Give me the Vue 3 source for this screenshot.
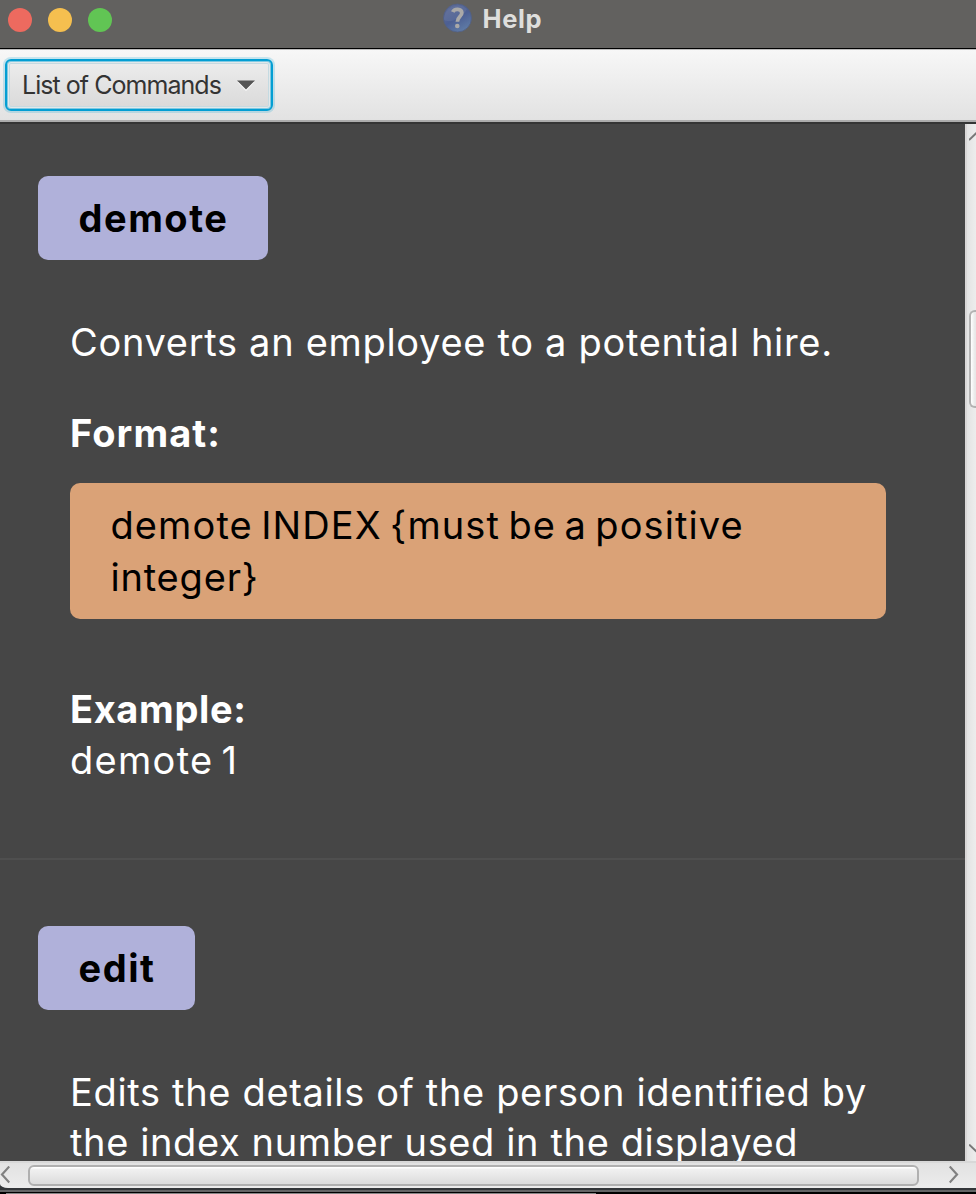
<script setup>
const commands = [
  {
    name: 'demote',
    summary: [{ text: 'Converts an employee to a potential hire.', fit: 's69' }],
    format: [
      { text: 'demote INDEX {must be a positive', fit: 'tight-words' },
      { text: 'integer}', fit: 's80' },
    ],
    example: 'demote 1',
  },
  {
    name: 'edit',
    summary: [
      { text: 'Edits the details of the person identified by', fit: 's66' },
      { text: 'the index number used in the displayed', fit: 's62' },
    ],
  },
]
</script>

<template>
  <div class="window">
    <header class="titlebar">
      <div class="lights">
        <i class="light red"></i>
        <i class="light yellow"></i>
        <i class="light green"></i>
      </div>
      <div class="title">
        <svg width="30" height="30" viewBox="0 0 30 30">
          <defs>
            <linearGradient id="orb" x1="0.2" y1="0" x2="0.8" y2="1">
              <stop offset="0" stop-color="#5f6c98" />
              <stop offset="0.5" stop-color="#4c5f93" />
              <stop offset="1" stop-color="#6280a9" />
            </linearGradient>
          </defs>
          <circle cx="15.5" cy="15" r="14" fill="url(#orb)" stroke="#526083" stroke-width="0.8" />
          <path d="M2 17C7 20 19 17 25 6A14 14 0 0 0 2 17Z" fill="#7584a8" opacity="0.28" />
          <path d="M10.8 9C12.2 5.4 19.6 5.2 19.8 9.8C19.9 13.7 15.4 13.4 15.4 18.8" fill="none" stroke="#aaa9a8" stroke-width="3.8" />
          <circle cx="15.3" cy="23" r="2.3" fill="#aaa9a8" />
        </svg>
        <span>Help</span>
      </div>
    </header>

    <div class="toolbar">
      <button class="menu-button">
        <span>List of Commands</span>
        <svg width="18" height="11" viewBox="0 0 18 11">
          <path d="M0.5 2H17.5L9 11Z" fill="#fff" />
          <path d="M0 0.5H18L9 9.5Z" fill="#555" />
        </svg>
      </button>
    </div>

    <div class="body">
      <main class="page">
        <section v-for="cmd in commands" :key="cmd.name" class="command">
          <h2 class="badge">{{ cmd.name }}</h2>
          <div class="details">
            <p class="summary">
              <span v-for="line in cmd.summary" :key="line.text" class="line" :class="line.fit">{{ line.text }}</span>
            </p>
            <template v-if="cmd.format">
              <h3 class="label format-label">Format:</h3>
              <p class="format">
                <span v-for="line in cmd.format" :key="line.text" class="line" :class="line.fit">{{ line.text }}</span>
              </p>
              <h3 class="label example-label">Example:</h3>
              <p class="line example">{{ cmd.example }}</p>
            </template>
          </div>
        </section>
      </main>
      <aside class="vscroll">
        <svg class="up" width="7" height="9" viewBox="0 0 7 9">
          <path d="M0 8L8 0.5" fill="none" stroke="#777" stroke-width="2" />
        </svg>
        <div class="vthumb"></div>
        <svg class="down" width="7" height="9" viewBox="0 0 7 9">
          <path d="M0 0.5L8 8" fill="none" stroke="#777" stroke-width="2" />
        </svg>
      </aside>
    </div>

    <footer class="bottom">
      <div class="hscroll">
        <svg width="10" height="18" viewBox="0 0 10 18">
          <path d="M9.3 0.5L2 8.5L9.3 16.5" fill="none" stroke="#808080" stroke-width="2.2" />
        </svg>
        <div class="hthumb"></div>
        <svg width="10" height="18" viewBox="0 0 10 18">
          <path d="M0.7 0.5L8 8.5L0.7 16.5" fill="none" stroke="#808080" stroke-width="2.2" />
        </svg>
      </div>
    </footer>
    <div class="edge">
      <i class="edge-light"></i>
    </div>
  </div>
</template>

<style>
html,
body {
  background: #464646;
  overflow: hidden;
}
</style>

<style scoped>
* {
  box-sizing: border-box;
}
h2,
h3,
p {
  margin: 0;
}
.window {
  width: 976px;
  height: 1194px;
  display: flex;
  flex-direction: column;
  overflow: hidden;
  background: #464646;
  font-family: Inter, 'Open Sans', sans-serif;
}
.titlebar {
  height: 49px;
  flex: none;
  display: flex;
  background: #62615f;
  border-bottom: 1px solid #000;
}
.lights {
  display: flex;
  gap: 16px;
  padding: 8px 0 0 8px;
  width: 442px;
}
.light {
  width: 24px;
  height: 24px;
  border-radius: 50%;
}
.red {
  background: #ed6a5f;
}
.yellow {
  background: #f5bf4f;
}
.green {
  background: #61c554;
}
.title {
  display: flex;
  gap: 10.5px;
  padding-top: 3px;
  height: 34px;
  color: #dededc;
  font-size: 25.5px;
  font-weight: 700;
  line-height: 32px;
  letter-spacing: 0.6px;
}
.toolbar {
  height: 75px;
  flex: none;
  padding: 10px 0 0 5px;
  background: linear-gradient(#bdbdbd 0 1px, #f7f7f7 1px, #e2e2e2 71px, #adadad 71px 73px, #353535 73px);
}
.menu-button {
  display: flex;
  align-items: center;
  width: 268px;
  height: 52px;
  padding: 0 16px 0 15px;
  justify-content: space-between;
  border: 2px solid #039ed3;
  border-radius: 6px;
  background: linear-gradient(#ededed, #d9d9d9);
  box-shadow: 0 0 0 2px #039ed333, inset 0 0 0 1px #7fc9e2, inset 0 0 0 2px #e3e8ea, inset 0 0 0 3px #c5dae1;
  color: #333;
  font: 400 25px/30px Inter, sans-serif;
  letter-spacing: -0.96px;
}
.menu-button span {
  white-space: nowrap;
}
.body {
  display: flex;
  flex: none;
  height: 1037px;
}
.page {
  width: 965px;
  overflow: hidden;
  background: #464646;
  color: #fff;
  font-size: 38px;
}
.command {
  padding: 52px 38px 0;
  height: 736px;
  border-bottom: 2px solid #4f4f4f;
}
.command + .command {
  padding-top: 66px;
}
.badge {
  width: fit-content;
  height: 84px;
  padding: 16px 39.5px 0 40.6px;
  border-radius: 10px;
  background: #b0b1da;
  color: #000;
  font-size: 38px;
  font-weight: 700;
  line-height: 52px;
  letter-spacing: 1.5px;
}
.details {
  padding: 56.5px 0 0 32px;
}
.line {
  display: block;
  line-height: 51px;
  white-space: nowrap;
}
.summary .line {
  line-height: 50px;
}
.s62 {
  letter-spacing: 0.62px;
}
.s66 {
  letter-spacing: 0.66px;
}
.s69 {
  letter-spacing: 0.69px;
}
.s80 {
  letter-spacing: 0.8px;
}
.tight-words {
  letter-spacing: 1.1px;
  word-spacing: -3.4px;
}
.label {
  font-size: 38px;
  font-weight: 700;
  line-height: 52px;
}
.format-label {
  margin-top: 40.5px;
  letter-spacing: 1.05px;
}
.example-label {
  margin-top: 64px;
  letter-spacing: 0.65px;
}
.example {
  letter-spacing: 1.3px;
  word-spacing: -4px;
}
.format {
  width: 816px;
  height: 136px;
  margin-top: 24px;
  padding: 16px 40px 16px 40.5px;
  border-radius: 10px;
  background: #daa277;
  color: #000;
}
.format .line {
  line-height: 52px;
}
.vscroll {
  width: 11px;
  overflow: hidden;
  display: flex;
  flex-direction: column;
  align-items: flex-end;
  background: linear-gradient(90deg, #d9d7d7 0 2px, #e3e3e3 2px, #ededed);
}
.up {
  flex: none;
  margin-top: 8px;
}
.vthumb {
  width: 7px;
  height: 98px;
  flex: none;
  margin: 169px 0 auto;
  border: 2px solid #b2b2b2;
  border-right: 0;
  border-radius: 6px 0 0 6px;
  background: linear-gradient(90deg, #fff, #e8e8e8 4px);
}
.down {
  flex: none;
  margin-bottom: 8px;
}
.bottom {
  flex: none;
  background: #333639;
}
.hscroll {
  height: 27px;
  display: flex;
  align-items: center;
  border-bottom-left-radius: 8px 4px;
  background: linear-gradient(#d8d8d8 0 2px, #e2e2e2 2px, #ececec);
}
.hthumb {
  width: 891px;
  height: 21px;
  margin: 2px 30px 0 18px;
  border: 2px solid #b0b0b0;
  border-radius: 6px;
  background: linear-gradient(#fff 0 1px, #f1f1f1 2px, #dcdcdc);
}
.edge {
  height: 6px;
  flex: none;
  background: linear-gradient(#333639 0 2px, #636465 2px 4px, #000 4px);
}
.edge-light {
  display: block;
  width: 590px;
  height: 1px;
  margin: 5px 0 0 6px;
  background: #858585;
}
</style>
